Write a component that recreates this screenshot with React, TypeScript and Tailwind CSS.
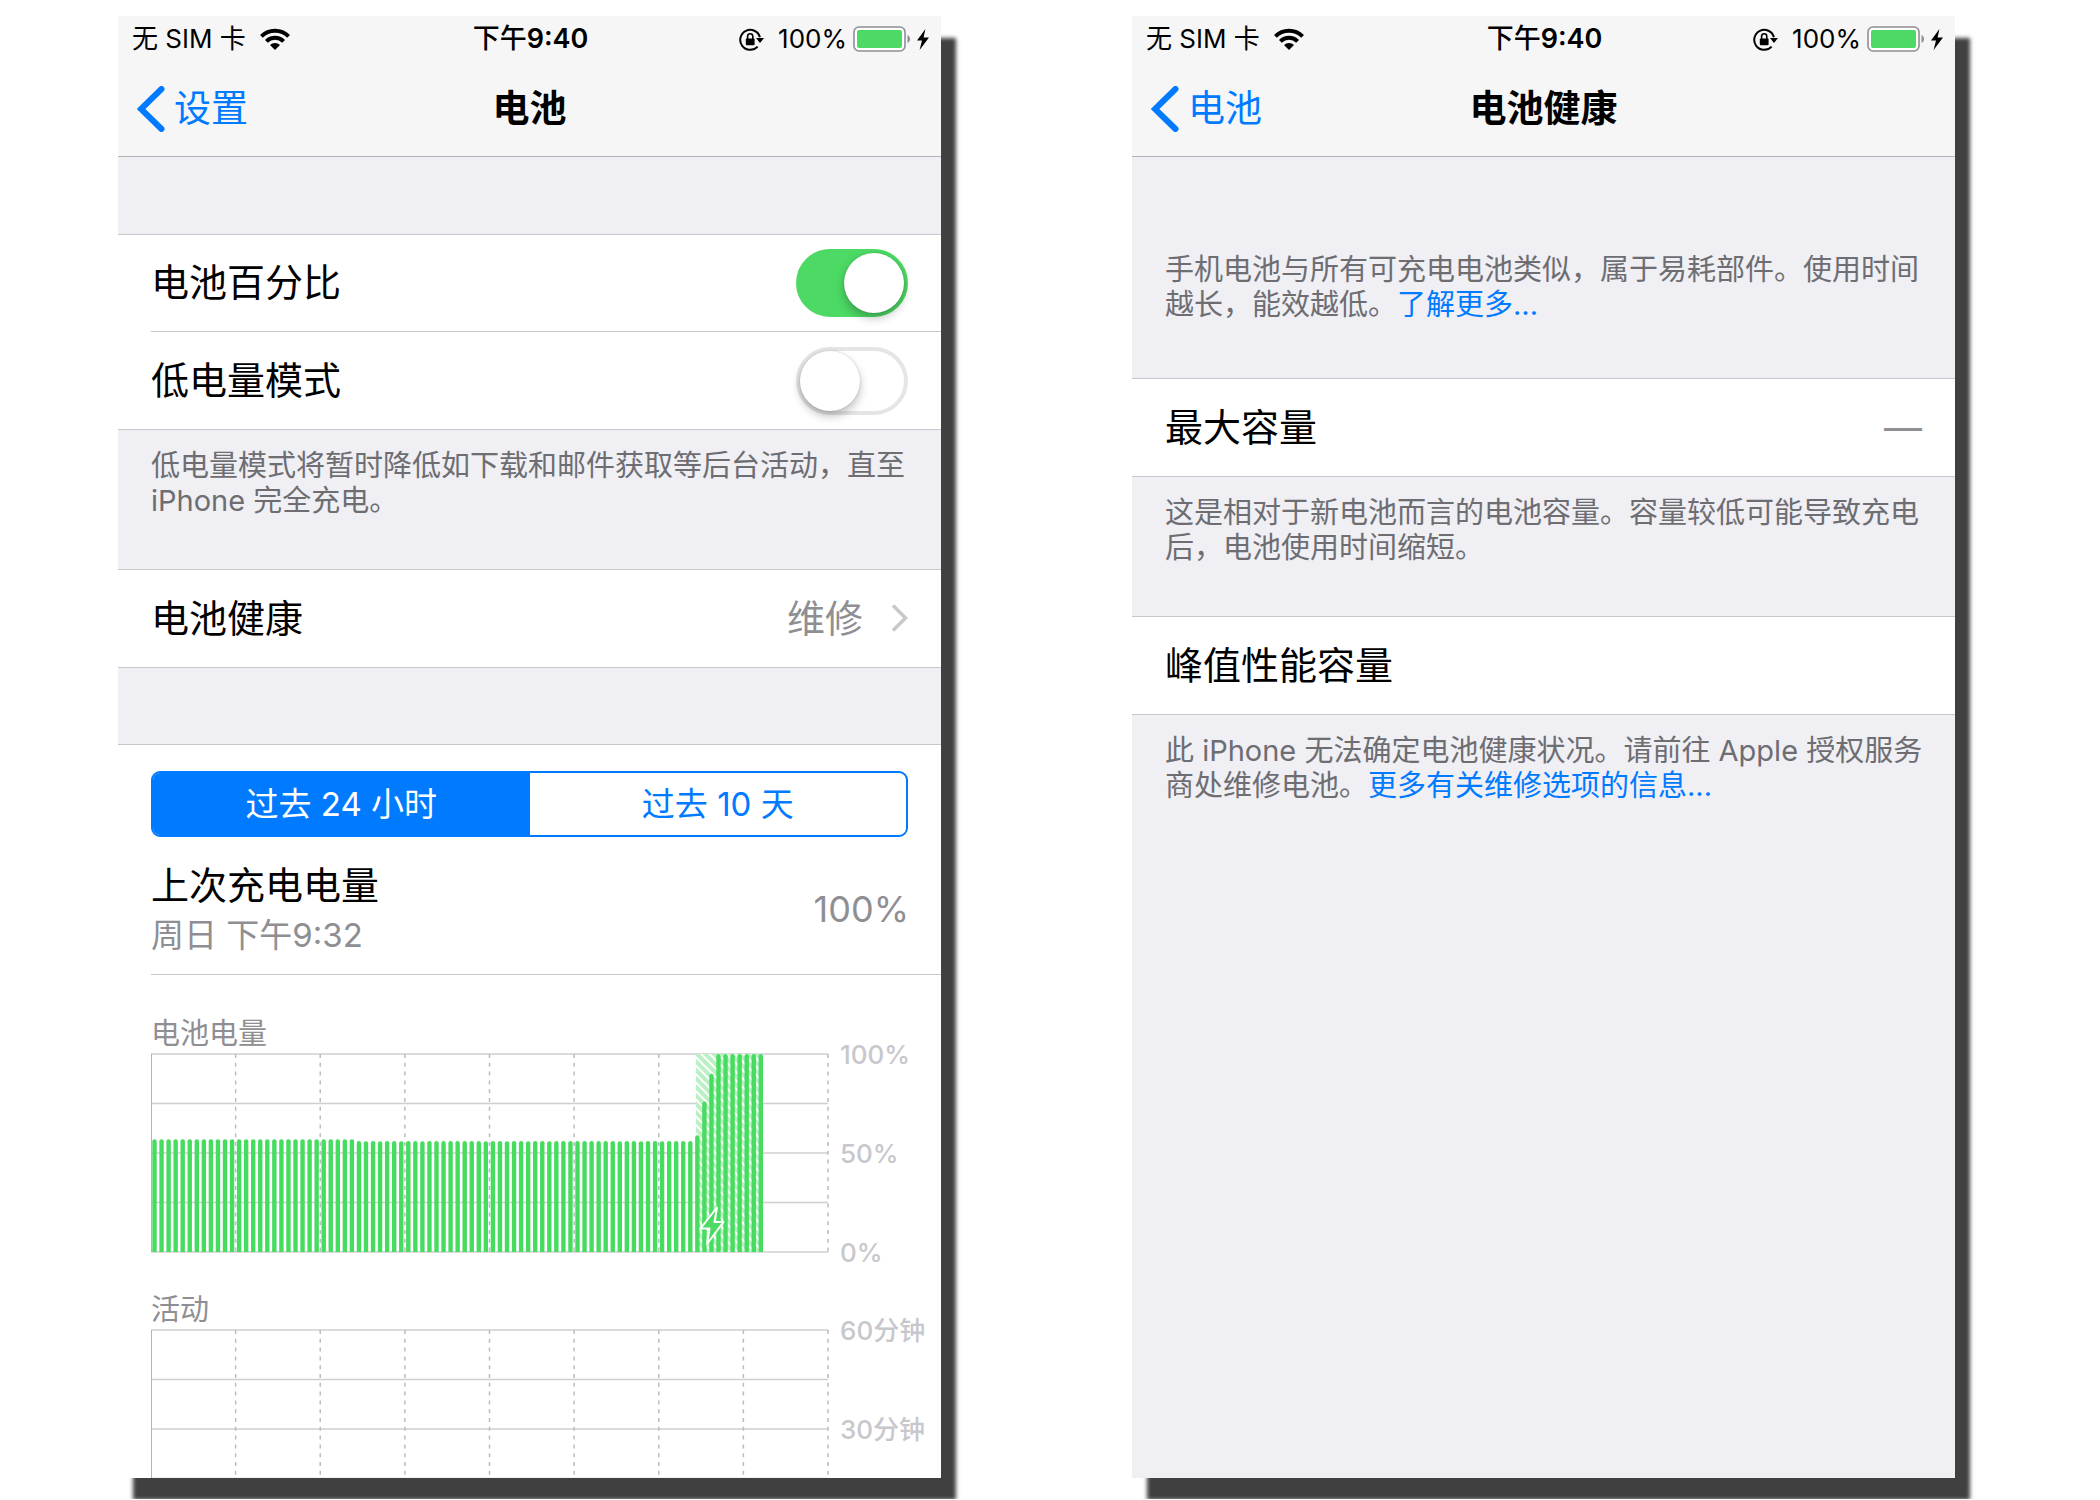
import type { ReactNode } from 'react'
import clsx from 'clsx'

const BAR_STEP = 7.05
const CHART_WIDTH = 677
const CHART_HEIGHT = 198

const levels = Array.from({ length: 87 }, (_, i) => {
  if (i < 29) return 57
  if (i < 77) return 56
  if (i === 77) return 59
  if (i === 78) return 76
  if (i === 79) return 90
  return 100
})

function WifiIcon() {
  return (
    <svg viewBox="0 0 30 22" className="h-[22px] w-[30px]" aria-hidden="true">
      <g fill="none" stroke="black" strokeWidth="4">
        <path d="M1.4 8.4a19.2 19.2 0 0 1 27.2 0" />
        <path d="M6.4 13.4a12.2 12.2 0 0 1 17.2 0" />
      </g>
      <path d="M15 22l-5-5a7 7 0 0 1 10 0z" />
    </svg>
  )
}

function RotationLockIcon() {
  return (
    <svg viewBox="0 0 25 23" className="h-[23px] w-[25px]" aria-hidden="true">
      <path
        d="M20.9 9.2A10 10 0 1 0 18.6 18.6"
        fill="none"
        stroke="black"
        strokeWidth="2"
      />
      <path d="M17 10h8l-4 5z" />
      <rect x="6.8" y="10.4" width="8.8" height="6.8" rx="1" />
      <path
        d="M8.6 11V8.4a2.6 2.6 0 0 1 5.2 0V11"
        fill="none"
        stroke="black"
        strokeWidth="1.6"
      />
    </svg>
  )
}

function BatteryIcon() {
  return (
    <svg viewBox="0 0 58 26" className="h-[26px] w-[58px]" aria-hidden="true">
      <rect
        x="1"
        y="1"
        width="51"
        height="24"
        rx="5"
        fill="white"
        stroke="#8f8f93"
        strokeWidth="1.6"
      />
      <rect x="4" y="4" width="45" height="18" rx="2" fill="#4cd964" />
      <path d="M54.500 9c3.4 1.4 3.4 6.6 0 8z" fill="#8f8f93" />
    </svg>
  )
}

function BoltIcon() {
  return (
    <svg viewBox="0 0 12 21" className="h-[21px] w-3" aria-hidden="true">
      <path d="M8.4 0L0 11.6h5L2.6 21 12 8.6H6.6z" />
    </svg>
  )
}

function StatusBar() {
  return (
    <div className="grid h-[46px] grid-cols-[1fr_auto_1fr] items-center pl-[14px] pr-3 text-[26px] leading-[34px]">
      <div className="flex items-center gap-[14px]">
        <span>无 SIM 卡</span>
        <WifiIcon />
      </div>
      <span className="text-[27px] font-semibold">
        <span className="font-medium">下午</span>9:40
      </span>
      <div className="flex items-center justify-end">
        <RotationLockIcon />
        <span className="mr-[6px] ml-[14px]">100%</span>
        <BatteryIcon />
        <span className="ml-[6px]">
          <BoltIcon />
        </span>
      </div>
    </div>
  )
}

function Header({ back, title }: { back: string; title: string }) {
  return (
    <header className="border-b border-[#b2b2b7] bg-[#f6f6f7]">
      <StatusBar />
      <div className="grid h-[94px] grid-cols-[1fr_auto_1fr] items-center px-[19px] text-[37px] leading-[48px]">
        <a href="#" className="flex items-center gap-[9px] text-[#007aff]">
          <svg
            viewBox="0 0 28 46"
            className="h-[46px] w-7"
            fill="none"
            stroke="currentColor"
            strokeWidth="6"
            strokeLinecap="round"
            aria-hidden="true"
          >
            <path d="M24.5 3L4 23l20.500 20" />
          </svg>
          {back}
        </a>
        <h1 className="font-semibold">{title}</h1>
      </div>
    </header>
  )
}

function Screen({
  back,
  title,
  children
}: {
  back: string
  title: string
  children: ReactNode
}) {
  return (
    <section className="min-w-0 flex-1 bg-[#efeff4] shadow-[15px_22px_4px_#404040]">
      <Header back={back} title={title} />
      {children}
    </section>
  )
}

function Group({ children }: { children: ReactNode }) {
  return (
    <div className="border-y border-[#c8c7cc] bg-white pl-[33px]">
      <div className="divide-y divide-[#c8c7cc]">{children}</div>
    </div>
  )
}

const rowClass =
  'flex h-[97px] items-center justify-between pr-[33px] pb-[2px] text-[38px] leading-[48px]'

function ToggleRow({
  id,
  label,
  checked
}: {
  id: string
  label: string
  checked?: boolean
}) {
  return (
    <div className={rowClass}>
      <label htmlFor={id}>{label}</label>
      <input
        id={id}
        type="checkbox"
        defaultChecked={checked}
        className="mt-[2px] flex h-[68px] w-28 appearance-none items-center rounded-full border-4 border-[#e5e5e5] bg-white before:size-[60px] before:rounded-full before:bg-white before:shadow-[0_5px_10px_rgba(0,0,0,0.25),0_0_2px_rgba(0,0,0,0.2)] checked:justify-end checked:border-[#4cd964] checked:bg-[#4cd964]"
      />
    </div>
  )
}

function Note({ className, children }: { className?: string; children: ReactNode }) {
  return (
    <p
      className={clsx(
        'pr-7 pl-[33px] text-[29px] leading-[35px] text-[#6d6d72]',
        className ?? 'pt-[18px] pb-[51px]'
      )}
    >
      {children}
    </p>
  )
}

function NoteLink({ children }: { children: ReactNode }) {
  return (
    <a href="#" className="text-[#007aff]">
      {children}
    </a>
  )
}

function Grid() {
  const rows = [0, 1, 2, 3, 4].map((i) => (i * CHART_HEIGHT) / 4)
  const columns = [1, 2, 3, 4, 5, 6, 7, 8].map((i) => (i * CHART_WIDTH) / 8)

  return (
    <g fill="none">
      {rows.map((y) => (
        <path key={y} d={`M0 ${y}H${CHART_WIDTH}`} stroke="#cfcfd1" strokeWidth="1.5" />
      ))}
      {columns.map((x) => (
        <path
          key={x}
          d={`M${x} 0V${CHART_HEIGHT}`}
          stroke="#bcbcc0"
          strokeWidth="1.5"
          strokeDasharray="4 4.8"
        />
      ))}
      <path d={`M0.500 0V${CHART_HEIGHT}`} stroke="#b4b4b8" />
    </g>
  )
}

function LevelBars() {
  const chargingX = 77 * BAR_STEP + 2

  return (
    <g>
      <defs>
        <pattern
          id="charging"
          width="6"
          height="6"
          patternUnits="userSpaceOnUse"
          patternTransform="rotate(45)"
        >
          <rect width="6" height="6" fill="#b9f1c3" />
          <rect width="6" height="2" fill="white" />
        </pattern>
      </defs>
      <rect
        x={chargingX}
        width={10 * BAR_STEP - 4}
        height={CHART_HEIGHT}
        fill="url(#charging)"
      />
      {levels.map((level, i) => {
        const x = i * BAR_STEP + 3.5
        const top = CHART_HEIGHT * (1 - level / 100)
        return (
          <path
            key={i}
            d={`M${x - 2.2} ${CHART_HEIGHT}V${top + 2.2}a2.2 2.2 0 0 1 4.4 0V${CHART_HEIGHT}z`}
            fill="#46dc5f"
          />
        )
      })}
      <path
        d="M566 153.500L549.500 174.500H558.500L556 190L572.500 168H563.500z"
        fill="#4cd964"
        stroke="white"
        strokeWidth="2"
        strokeLinejoin="round"
      />
    </g>
  )
}

function Chart({
  title,
  ticks,
  children
}: {
  title: string
  ticks: string[]
  children?: ReactNode
}) {
  return (
    <div className="pl-[33px]">
      <h2 className="pt-1 text-[29px] leading-10 text-[#8e8e93]">{title}</h2>
      <div className="flex gap-3">
        <svg
          viewBox="0 0 677 198"
          preserveAspectRatio="none"
          className="h-[198px] min-w-0 flex-1 overflow-visible"
          role="img"
          aria-label={title}
        >
          <Grid />
          {children}
        </svg>
        <div className="-mt-4 -mb-[18px] flex w-[101px] shrink-0 flex-col gap-[65px] text-[26px] font-medium leading-[34px] text-[#c7c7cc]">
          {ticks.map((tick) => (
            <span key={tick}>{tick}</span>
          ))}
        </div>
      </div>
    </div>
  )
}

function BatteryScreen() {
  return (
    <Screen back="设置" title="电池">
      <div className="pt-[77px]">
        <Group>
          <ToggleRow id="percentage" label="电池百分比" checked />
          <ToggleRow id="low-power" label="低电量模式" />
        </Group>
      </div>
      <Note>低电量模式将暂时降低如下载和邮件获取等后台活动，直至 iPhone 完全充电。</Note>
      <Group>
        <a href="#" className={rowClass}>
          电池健康
          <span className="flex items-center gap-7 text-[#8e8e93]">
            维修
            <svg
              viewBox="0 0 17 28"
              className="h-7 w-[17px]"
              fill="none"
              stroke="#c7c7cc"
              strokeWidth="3.500"
              aria-hidden="true"
            >
              <path d="M2 1.500L14.500 14L2 26.500" />
            </svg>
          </span>
        </a>
      </Group>

      <div className="mt-[76px] border-t border-[#c8c7cc] bg-white pt-[26px]">
        <div className="mx-[33px] grid h-[66px] grid-cols-2 overflow-hidden rounded-[9px] border-2 border-[#007aff] text-[33px] leading-[44px] text-[#007aff]">
          <button type="button" className="bg-[#007aff] text-white">
            过去 24 小时
          </button>
          <button type="button">过去 10 天</button>
        </div>
        <div className="ml-[33px] flex h-[138px] items-center justify-between border-b border-[#c8c7cc] pt-[6px] pr-8">
          <div>
            <div className="text-[38px] leading-[52px]">上次充电电量</div>
            <div className="text-[33px] leading-[48px] text-[#8e8e93]">周日 下午9:32</div>
          </div>
          <span className="text-[36px] leading-[48px] text-[#8e8e93]">100%</span>
        </div>
        <div className="pt-[35px]">
          <Chart title="电池电量" ticks={['100%', '50%', '0%']}>
            <LevelBars />
          </Chart>
        </div>
        {/* the activity chart runs off the bottom of the screen */}
        <div className="mt-[34px] h-[192px] overflow-hidden">
          <Chart title="活动" ticks={['60分钟', '30分钟']} />
        </div>
      </div>
    </Screen>
  )
}

function HealthScreen() {
  return (
    <Screen back="电池" title="电池健康">
      <Note className="pt-[95px] pb-14">
        手机电池与所有可充电电池类似，属于易耗部件。使用时间越长，能效越低。
        <NoteLink>了解更多...</NoteLink>
      </Note>
      <Group>
        <div className={rowClass}>
          最大容量
          <span className="text-[#8e8e93]">—</span>
        </div>
      </Group>
      <Note>这是相对于新电池而言的电池容量。容量较低可能导致充电后，电池使用时间缩短。</Note>
      <Group>
        <div className={rowClass}>峰值性能容量</div>
      </Group>
      <Note>
        此 iPhone 无法确定电池健康状况。请前往 Apple 授权服务商处维修电池。
        <NoteLink>更多有关维修选项的信息...</NoteLink>
      </Note>
    </Screen>
  )
}

export default function App() {
  return (
    <main
      lang="zh-CN"
      className="flex gap-[191px] overflow-hidden bg-white pt-4 pr-[145px] pb-[21px] pl-[118px] font-['Inter','Noto_Sans_CJK_SC',sans-serif] text-black"
    >
      <BatteryScreen />
      <HealthScreen />
    </main>
  )
}
